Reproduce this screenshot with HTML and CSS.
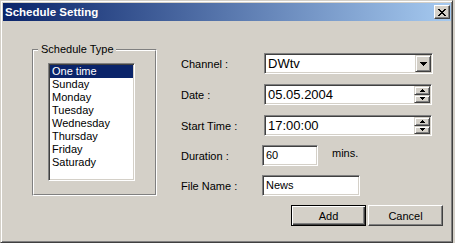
FILE: index.html
```html
<!DOCTYPE html>
<html lang="en">
<head>
  <meta charset="UTF-8" />
  <title>Schedule Setting</title>
  <link rel="stylesheet" href="styles.css">
</head>
<body>

  <div class="window">
    <div class="titlebar">
      <span class="title">Schedule Setting</span>
      <span class="close-btn">
        <svg width="8" height="7" viewBox="0 0 8 7"><path d="M0 0h2v1H0zM6 0h2v1H6zM1 1h2v1H1zM5 1h2v1H5zM2 2h4v1H2zM3 3h2v1H3zM2 4h4v1H2zM1 5h2v1H1zM5 5h2v1H5zM0 6h2v1H0zM6 6h2v1H6z"/></svg>
      </span>
    </div>

    <div class="dialog">
      <div class="group">
        <span class="group-label">Schedule Type</span>
        <div class="group-inner">
          <ul class="listbox">
            <li class="selected">One time</li>
            <li>Sunday</li>
            <li>Monday</li>
            <li>Tuesday</li>
            <li>Wednesday</li>
            <li>Thursday</li>
            <li>Friday</li>
            <li>Saturady</li>
          </ul>
        </div>
      </div>

      <div class="form">
        <div class="fields">
          <label>Channel :</label>
          <div class="combo">
            <span class="value big">DWtv</span>
            <span class="drop-btn">
              <svg width="7" height="4" viewBox="0 0 7 4"><path d="M0 0h7v1H0zM1 1h5v1H1zM2 2h3v1H2zM3 3h1v1H3z"/></svg>
            </span>
          </div>

          <label>Date :</label>
          <div class="spin">
            <span class="value big">05.05.2004</span>
            <span class="spin-btns">
              <span class="spin-btn"><svg width="5" height="3" viewBox="0 0 5 3"><path d="M2 0h1v1H2zM1 1h3v1H1zM0 2h5v1H0z"/></svg></span>
              <span class="spin-btn"><svg width="5" height="3" viewBox="0 0 5 3"><path d="M0 0h5v1H0zM1 1h3v1H1zM2 2h1v1H2z"/></svg></span>
            </span>
          </div>

          <label>Start Time :</label>
          <div class="spin">
            <span class="value big">17:00:00</span>
            <span class="spin-btns">
              <span class="spin-btn"><svg width="5" height="3" viewBox="0 0 5 3"><path d="M2 0h1v1H2zM1 1h3v1H1zM0 2h5v1H0z"/></svg></span>
              <span class="spin-btn"><svg width="5" height="3" viewBox="0 0 5 3"><path d="M0 0h5v1H0zM1 1h3v1H1zM2 2h1v1H2z"/></svg></span>
            </span>
          </div>

          <label>Duration :</label>
          <div class="duration-row">
            <div class="edit short"><span class="value">60</span></div>
            <span class="unit">mins.</span>
          </div>

          <label>File Name :</label>
          <div class="edit medium"><span class="value">News</span></div>
        </div>

        <div class="buttons">
          <button class="btn default">Add</button>
          <button class="btn">Cancel</button>
        </div>
      </div>
    </div>
  </div>

</body>
</html>
```

FILE: styles.css
```css
* {
  box-sizing: border-box;
  margin: 0;
  padding: 0;
}

body {
  background: #d4d0c8;
  font-family: 'Liberation Sans', Arial, sans-serif;
  font-size: 11px;
  line-height: 13px;
  color: #000;
}

/* window frame */
.window {
  width: 453px;
  height: 243px;
  background: #d4d0c8;
  border: 1px solid;
  border-color: #d4d0c8 #404040 #404040 #d4d0c8;
  box-shadow: inset 1px 1px #fff, inset -1px -1px #808080;
  padding: 2px 1px 2px 2px;
}

.titlebar {
  height: 18px;
  display: flex;
  align-items: center;
  justify-content: space-between;
  padding: 0 1px 0 2px;
  background: linear-gradient(to right, #0a246a, #a6caf0);
}

.title {
  color: #fff;
  font-weight: bold;
  font-size: 11.5px;
}

.close-btn {
  width: 16px;
  height: 14px;
  display: flex;
  align-items: center;
  justify-content: center;
  background: #d4d0c8;
  border: 1px solid;
  border-color: #fff #404040 #404040 #fff;
  box-shadow: inset -1px -1px #808080;
  padding-right: 1px;
}

/* dialog body */
.dialog {
  display: flex;
  align-items: flex-start;
}

.group {
  position: relative;
  width: 125px;
  height: 147px;
  margin: 28px 0 0 29px;
  border: 1px solid;
  border-color: #808080 #fff #fff #808080;
}

.group-inner {
  height: 100%;
  border: 1px solid;
  border-color: #fff #808080 #808080 #fff;
  padding: 12px 0 0 14px;
}

.group-label {
  position: absolute;
  top: -7px;
  left: 5px;
  padding: 0 2px 0 3px;
  background: #d4d0c8;
}

.listbox {
  list-style: none;
  width: 87px;
  height: 118px;
  background: #fff;
  border: 1px solid;
  border-color: #808080 #fff #fff #808080;
  box-shadow: inset 1px 1px #404040, inset -1px -1px #d4d0c8;
  padding: 1px;
}

.listbox li {
  height: 13px;
  padding-left: 2px;
}

.listbox li.selected {
  background: #0a246a;
  color: #fff;
}

/* form */
.form {
  width: 262px;
  margin: 32px 0 0 24px;
}

.fields {
  display: grid;
  grid-template-columns: 81px 1fr;
  grid-template-rows: 31px 31px 30px 30px 21px;
  align-items: start;
}

.fields label {
  padding-top: 5px;
}

.edit, .combo, .spin {
  height: 21px;
  display: flex;
  align-items: center;
  background: #fff;
  border: 1px solid;
  border-color: #808080 #fff #fff #808080;
  box-shadow: inset 1px 1px #404040, inset -1px -1px #d4d0c8;
  padding: 1px;
}

.combo {
  width: 169px;
  margin-left: 2px;
}

.spin {
  width: 168px;
  margin-left: 2px;
}

.edit.short {
  width: 56px;
}

.edit.medium {
  width: 98px;
}

.value {
  flex: 1;
  padding-left: 2px;
}

.value.big {
  font-size: 13px;
}

.drop-btn {
  width: 16px;
  height: 17px;
  display: flex;
  align-items: center;
  justify-content: center;
  background: #d4d0c8;
  border: 1px solid;
  border-color: #d4d0c8 #404040 #404040 #d4d0c8;
  box-shadow: inset 1px 1px #fff, inset -1px -1px #808080;
  padding-left: 1px;
}

.spin-btns {
  width: 16px;
  height: 17px;
  display: flex;
  flex-direction: column;
}

.spin-btn {
  flex: 1;
  display: flex;
  align-items: center;
  justify-content: center;
  background: #d4d0c8;
  border: 1px solid;
  border-color: #d4d0c8 #404040 #404040 #d4d0c8;
  box-shadow: inset 1px 1px #fff, inset -1px -1px #808080;
}

.duration-row {
  display: flex;
  align-items: flex-start;
}

.unit {
  margin: 2px 0 0 14px;
}

/* buttons */
.buttons {
  display: flex;
  justify-content: flex-end;
  gap: 2px;
  margin-top: 9px;
}

.btn {
  width: 75px;
  height: 21px;
  font-family: inherit;
  font-size: 11px;
  color: #000;
  background: #d4d0c8;
  border: 1px solid;
  border-color: #fff #404040 #404040 #fff;
  box-shadow: inset -1px -1px #808080;
}

.btn.default {
  border-color: #000;
  box-shadow: inset 1px 1px #fff, inset -1px -1px #404040, inset -2px -2px #808080;
}
```
